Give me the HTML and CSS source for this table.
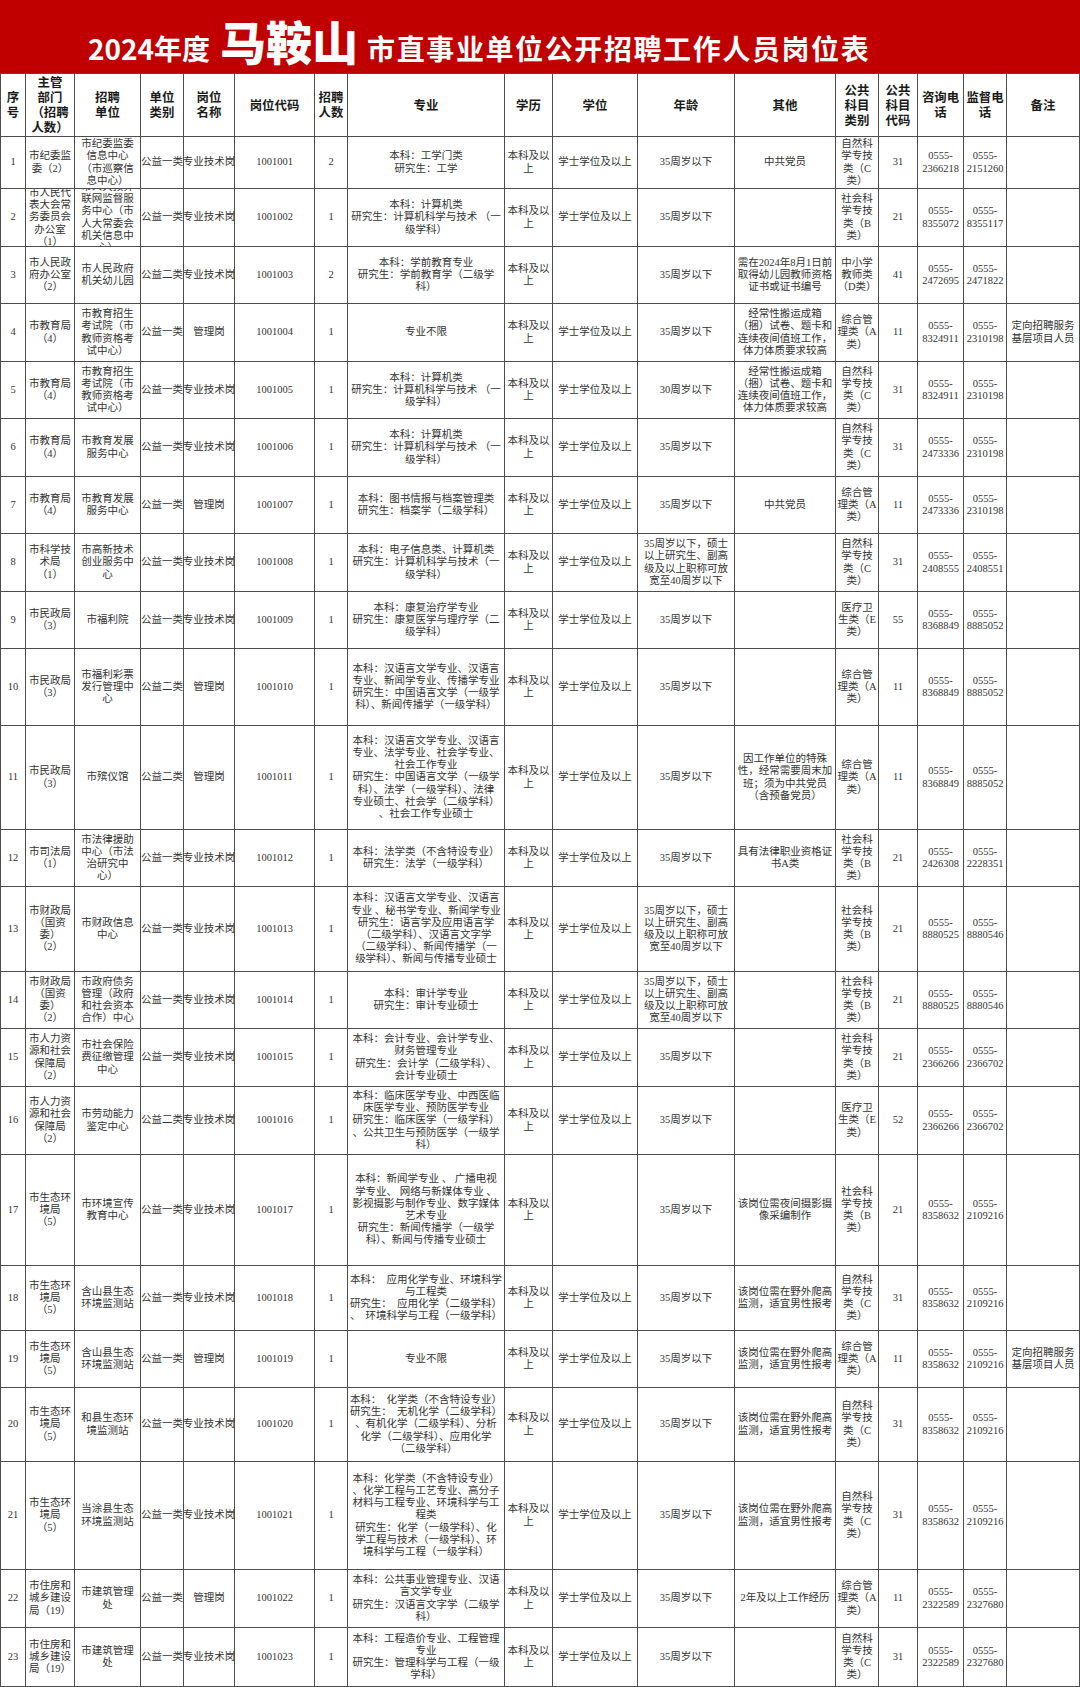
FILE: index.html
```html
<!DOCTYPE html>
<html lang="zh-CN">
<head>
<meta charset="utf-8">
<title>2024年度马鞍山市直事业单位公开招聘工作人员岗位表</title>
<link rel="stylesheet" href="styles.css">
</head>
<body>
<header class="banner">
<span class="t-small">2024年度</span><span class="t-big">马鞍山</span><span class="t-rest">市直事业单位公开招聘工作人员岗位表</span>
</header>
<main class="sheet">
<div class="c h">序
号</div>
<div class="c h">主管
部门
（招聘
人数）</div>
<div class="c h">招聘
单位</div>
<div class="c h">单位
类别</div>
<div class="c h">岗位
名称</div>
<div class="c h">岗位代码</div>
<div class="c h">招聘
人数</div>
<div class="c h">专业</div>
<div class="c h">学历</div>
<div class="c h">学位</div>
<div class="c h">年龄</div>
<div class="c h">其他</div>
<div class="c h">公共
科目
类别</div>
<div class="c h">公共
科目
代码</div>
<div class="c h">咨询电
话</div>
<div class="c h">监督电
话</div>
<div class="c h">备注</div>

<div class="c">1</div>
<div class="c">市纪委监
委（2）</div>
<div class="c">市纪委监委
信息中心
（市巡察信
息中心）</div>
<div class="c">公益一类</div>
<div class="c">专业技术岗</div>
<div class="c">1001001</div>
<div class="c">2</div>
<div class="c">本科：工学门类
研究生：工学</div>
<div class="c">本科及以
上</div>
<div class="c">学士学位及以上</div>
<div class="c">35周岁以下</div>
<div class="c">中共党员</div>
<div class="c">自然科
学专技
类（C
类）</div>
<div class="c">31</div>
<div class="c">0555-
2366218</div>
<div class="c">0555-
2151260</div>
<div class="c"></div>

<div class="c">2</div>
<div class="c">市人民代
表大会常
务委员会
办公室
（1）</div>
<div class="c">市人大预算
联网监督服
务中心（市
人大常委会
机关信息中
心）</div>
<div class="c">公益一类</div>
<div class="c">专业技术岗</div>
<div class="c">1001002</div>
<div class="c">1</div>
<div class="c">本科：计算机类
研究生：计算机科学与技术 （一
级学科）</div>
<div class="c">本科及以
上</div>
<div class="c">学士学位及以上</div>
<div class="c">35周岁以下</div>
<div class="c"></div>
<div class="c">社会科
学专技
类（B
类）</div>
<div class="c">21</div>
<div class="c">0555-
8355072</div>
<div class="c">0555-
8355117</div>
<div class="c"></div>

<div class="c">3</div>
<div class="c">市人民政
府办公室
（2）</div>
<div class="c">市人民政府
机关幼儿园</div>
<div class="c">公益二类</div>
<div class="c">专业技术岗</div>
<div class="c">1001003</div>
<div class="c">2</div>
<div class="c">本科：学前教育专业
研究生：学前教育学（二级学
科）</div>
<div class="c">本科及以
上</div>
<div class="c"></div>
<div class="c">35周岁以下</div>
<div class="c">需在2024年8月1日前
取得幼儿园教师资格
证书或证书编号</div>
<div class="c">中小学
教师类
（D类）</div>
<div class="c">41</div>
<div class="c">0555-
2472695</div>
<div class="c">0555-
2471822</div>
<div class="c"></div>

<div class="c">4</div>
<div class="c">市教育局
（4）</div>
<div class="c">市教育招生
考试院（市
教师资格考
试中心）</div>
<div class="c">公益一类</div>
<div class="c">管理岗</div>
<div class="c">1001004</div>
<div class="c">1</div>
<div class="c">专业不限</div>
<div class="c">本科及以
上</div>
<div class="c">学士学位及以上</div>
<div class="c">35周岁以下</div>
<div class="c">经常性搬运成箱
（捆）试卷、题卡和
连续夜间值班工作，
体力体质要求较高</div>
<div class="c">综合管
理类（A
类）</div>
<div class="c">11</div>
<div class="c">0555-
8324911</div>
<div class="c">0555-
2310198</div>
<div class="c">定向招聘服务
基层项目人员</div>

<div class="c">5</div>
<div class="c">市教育局
（4）</div>
<div class="c">市教育招生
考试院（市
教师资格考
试中心）</div>
<div class="c">公益一类</div>
<div class="c">专业技术岗</div>
<div class="c">1001005</div>
<div class="c">1</div>
<div class="c">本科：计算机类
研究生：计算机科学与技术 （一
级学科）</div>
<div class="c">本科及以
上</div>
<div class="c">学士学位及以上</div>
<div class="c">30周岁以下</div>
<div class="c">经常性搬运成箱
（捆）试卷、题卡和
连续夜间值班工作，
体力体质要求较高</div>
<div class="c">自然科
学专技
类（C
类）</div>
<div class="c">31</div>
<div class="c">0555-
8324911</div>
<div class="c">0555-
2310198</div>
<div class="c"></div>

<div class="c">6</div>
<div class="c">市教育局
（4）</div>
<div class="c">市教育发展
服务中心</div>
<div class="c">公益一类</div>
<div class="c">专业技术岗</div>
<div class="c">1001006</div>
<div class="c">1</div>
<div class="c">本科：计算机类
研究生：计算机科学与技术 （一
级学科）</div>
<div class="c">本科及以
上</div>
<div class="c">学士学位及以上</div>
<div class="c">35周岁以下</div>
<div class="c"></div>
<div class="c">自然科
学专技
类（C
类）</div>
<div class="c">31</div>
<div class="c">0555-
2473336</div>
<div class="c">0555-
2310198</div>
<div class="c"></div>

<div class="c">7</div>
<div class="c">市教育局
（4）</div>
<div class="c">市教育发展
服务中心</div>
<div class="c">公益一类</div>
<div class="c">管理岗</div>
<div class="c">1001007</div>
<div class="c">1</div>
<div class="c">本科：图书情报与档案管理类
研究生：档案学（二级学科）</div>
<div class="c">本科及以
上</div>
<div class="c">学士学位及以上</div>
<div class="c">35周岁以下</div>
<div class="c">中共党员</div>
<div class="c">综合管
理类（A
类）</div>
<div class="c">11</div>
<div class="c">0555-
2473336</div>
<div class="c">0555-
2310198</div>
<div class="c"></div>

<div class="c">8</div>
<div class="c">市科学技
术局
（1）</div>
<div class="c">市高新技术
创业服务中
心</div>
<div class="c">公益一类</div>
<div class="c">专业技术岗</div>
<div class="c">1001008</div>
<div class="c">1</div>
<div class="c">本科：电子信息类、计算机类
研究生：计算机科学与技术（一
级学科）</div>
<div class="c">本科及以
上</div>
<div class="c">学士学位及以上</div>
<div class="c">35周岁以下，硕士
以上研究生、副高
级及以上职称可放
宽至40周岁以下</div>
<div class="c"></div>
<div class="c">自然科
学专技
类（C
类）</div>
<div class="c">31</div>
<div class="c">0555-
2408555</div>
<div class="c">0555-
2408551</div>
<div class="c"></div>

<div class="c">9</div>
<div class="c">市民政局
（3）</div>
<div class="c">市福利院</div>
<div class="c">公益一类</div>
<div class="c">专业技术岗</div>
<div class="c">1001009</div>
<div class="c">1</div>
<div class="c">本科：康复治疗学专业
研究生：康复医学与理疗学（二
级学科）</div>
<div class="c">本科及以
上</div>
<div class="c">学士学位及以上</div>
<div class="c">35周岁以下</div>
<div class="c"></div>
<div class="c">医疗卫
生类（E
类）</div>
<div class="c">55</div>
<div class="c">0555-
8368849</div>
<div class="c">0555-
8885052</div>
<div class="c"></div>

<div class="c">10</div>
<div class="c">市民政局
（3）</div>
<div class="c">市福利彩票
发行管理中
心</div>
<div class="c">公益二类</div>
<div class="c">管理岗</div>
<div class="c">1001010</div>
<div class="c">1</div>
<div class="c">本科：汉语言文学专业、汉语言
专业、新闻学专业、传播学专业
研究生：中国语言文学（一级学
科）、新闻传播学（一级学科）</div>
<div class="c">本科及以
上</div>
<div class="c">学士学位及以上</div>
<div class="c">35周岁以下</div>
<div class="c"></div>
<div class="c">综合管
理类（A
类）</div>
<div class="c">11</div>
<div class="c">0555-
8368849</div>
<div class="c">0555-
8885052</div>
<div class="c"></div>

<div class="c">11</div>
<div class="c">市民政局
（3）</div>
<div class="c">市殡仪馆</div>
<div class="c">公益二类</div>
<div class="c">管理岗</div>
<div class="c">1001011</div>
<div class="c">1</div>
<div class="c">本科：汉语言文学专业、汉语言
专业、法学专业、社会学专业、
社会工作专业
研究生：中国语言文学（一级学
科）、法学（一级学科）、法律
专业硕士、社会学（二级学科）
、社会工作专业硕士</div>
<div class="c">本科及以
上</div>
<div class="c">学士学位及以上</div>
<div class="c">35周岁以下</div>
<div class="c">因工作单位的特殊
性，经常需要周末加
班；须为中共党员
（含预备党员）</div>
<div class="c">综合管
理类（A
类）</div>
<div class="c">11</div>
<div class="c">0555-
8368849</div>
<div class="c">0555-
8885052</div>
<div class="c"></div>

<div class="c">12</div>
<div class="c">市司法局
（1）</div>
<div class="c">市法律援助
中心（市法
治研究中
心）</div>
<div class="c">公益一类</div>
<div class="c">专业技术岗</div>
<div class="c">1001012</div>
<div class="c">1</div>
<div class="c">本科：法学类（不含特设专业）
研究生：法学（一级学科）</div>
<div class="c">本科及以
上</div>
<div class="c">学士学位及以上</div>
<div class="c">35周岁以下</div>
<div class="c">具有法律职业资格证
书A类</div>
<div class="c">社会科
学专技
类（B
类）</div>
<div class="c">21</div>
<div class="c">0555-
2426308</div>
<div class="c">0555-
2228351</div>
<div class="c"></div>

<div class="c">13</div>
<div class="c">市财政局
（国资
委）
（2）</div>
<div class="c">市财政信息
中心</div>
<div class="c">公益一类</div>
<div class="c">专业技术岗</div>
<div class="c">1001013</div>
<div class="c">1</div>
<div class="c">本科：汉语言文学专业、汉语言
专业 、秘书学专业、新闻学专业
研究生：语言学及应用语言学
（二级学科）、汉语言文字学
（二级学科）、新闻传播学（一
级学科）、新闻与传播专业硕士</div>
<div class="c">本科及以
上</div>
<div class="c">学士学位及以上</div>
<div class="c">35周岁以下，硕士
以上研究生、副高
级及以上职称可放
宽至40周岁以下</div>
<div class="c"></div>
<div class="c">社会科
学专技
类（B
类）</div>
<div class="c">21</div>
<div class="c">0555-
8880525</div>
<div class="c">0555-
8880546</div>
<div class="c"></div>

<div class="c">14</div>
<div class="c">市财政局
（国资
委）
（2）</div>
<div class="c">市政府债务
管理（政府
和社会资本
合作）中心</div>
<div class="c">公益一类</div>
<div class="c">专业技术岗</div>
<div class="c">1001014</div>
<div class="c">1</div>
<div class="c">本科：审计学专业
研究生：审计专业硕士</div>
<div class="c">本科及以
上</div>
<div class="c">学士学位及以上</div>
<div class="c">35周岁以下，硕士
以上研究生、副高
级及以上职称可放
宽至40周岁以下</div>
<div class="c"></div>
<div class="c">社会科
学专技
类（B
类）</div>
<div class="c">21</div>
<div class="c">0555-
8880525</div>
<div class="c">0555-
8880546</div>
<div class="c"></div>

<div class="c">15</div>
<div class="c">市人力资
源和社会
保障局
（2）</div>
<div class="c">市社会保险
费征缴管理
中心</div>
<div class="c">公益一类</div>
<div class="c">专业技术岗</div>
<div class="c">1001015</div>
<div class="c">1</div>
<div class="c">本科：会计专业、会计学专业、
财务管理专业
研究生：会计学（二级学科）、
会计专业硕士</div>
<div class="c">本科及以
上</div>
<div class="c">学士学位及以上</div>
<div class="c">35周岁以下</div>
<div class="c"></div>
<div class="c">社会科
学专技
类（B
类）</div>
<div class="c">21</div>
<div class="c">0555-
2366266</div>
<div class="c">0555-
2366702</div>
<div class="c"></div>

<div class="c">16</div>
<div class="c">市人力资
源和社会
保障局
（2）</div>
<div class="c">市劳动能力
鉴定中心</div>
<div class="c">公益二类</div>
<div class="c">专业技术岗</div>
<div class="c">1001016</div>
<div class="c">1</div>
<div class="c">本科：临床医学专业、中西医临
床医学专业、预防医学专业
研究生：临床医学（一级学科）
、公共卫生与预防医学（一级学
科）</div>
<div class="c">本科及以
上</div>
<div class="c">学士学位及以上</div>
<div class="c">35周岁以下</div>
<div class="c"></div>
<div class="c">医疗卫
生类（E
类）</div>
<div class="c">52</div>
<div class="c">0555-
2366266</div>
<div class="c">0555-
2366702</div>
<div class="c"></div>

<div class="c">17</div>
<div class="c">市生态环
境局
（5）</div>
<div class="c">市环境宣传
教育中心</div>
<div class="c">公益一类</div>
<div class="c">专业技术岗</div>
<div class="c">1001017</div>
<div class="c">1</div>
<div class="c">本科：新闻学专业 、 广播电视
学专业、 网络与新媒体专业 、
影视摄影与制作专业、数字媒体
艺术专业
研究生：新闻传播学（一级学
科）、新闻与传播专业硕士</div>
<div class="c">本科及以
上</div>
<div class="c"></div>
<div class="c">35周岁以下</div>
<div class="c">该岗位需夜间摄影摄
像采编制作</div>
<div class="c">社会科
学专技
类（B
类）</div>
<div class="c">21</div>
<div class="c">0555-
8358632</div>
<div class="c">0555-
2109216</div>
<div class="c"></div>

<div class="c">18</div>
<div class="c">市生态环
境局
（5）</div>
<div class="c">含山县生态
环境监测站</div>
<div class="c">公益一类</div>
<div class="c">专业技术岗</div>
<div class="c">1001018</div>
<div class="c">1</div>
<div class="c">本科：  应用化学专业、环境科学
与工程类
研究生：  应用化学（二级学科）
、  环境科学与工程（一级学科）</div>
<div class="c">本科及以
上</div>
<div class="c">学士学位及以上</div>
<div class="c">35周岁以下</div>
<div class="c">该岗位需在野外爬高
监测，适宜男性报考</div>
<div class="c">自然科
学专技
类（C
类）</div>
<div class="c">31</div>
<div class="c">0555-
8358632</div>
<div class="c">0555-
2109216</div>
<div class="c"></div>

<div class="c">19</div>
<div class="c">市生态环
境局
（5）</div>
<div class="c">含山县生态
环境监测站</div>
<div class="c">公益一类</div>
<div class="c">管理岗</div>
<div class="c">1001019</div>
<div class="c">1</div>
<div class="c">专业不限</div>
<div class="c">本科及以
上</div>
<div class="c">学士学位及以上</div>
<div class="c">35周岁以下</div>
<div class="c">该岗位需在野外爬高
监测，适宜男性报考</div>
<div class="c">综合管
理类（A
类）</div>
<div class="c">11</div>
<div class="c">0555-
8358632</div>
<div class="c">0555-
2109216</div>
<div class="c">定向招聘服务
基层项目人员</div>

<div class="c">20</div>
<div class="c">市生态环
境局
（5）</div>
<div class="c">和县生态环
境监测站</div>
<div class="c">公益一类</div>
<div class="c">专业技术岗</div>
<div class="c">1001020</div>
<div class="c">1</div>
<div class="c">本科：  化学类（不含特设专业）
研究生：  无机化学（二级学科）
、有机化学（二级学科）、分析
化学（二级学科）、应用化学
（二级学科）</div>
<div class="c">本科及以
上</div>
<div class="c">学士学位及以上</div>
<div class="c">35周岁以下</div>
<div class="c">该岗位需在野外爬高
监测，适宜男性报考</div>
<div class="c">自然科
学专技
类（C
类）</div>
<div class="c">31</div>
<div class="c">0555-
8358632</div>
<div class="c">0555-
2109216</div>
<div class="c"></div>

<div class="c">21</div>
<div class="c">市生态环
境局
（5）</div>
<div class="c">当涂县生态
环境监测站</div>
<div class="c">公益一类</div>
<div class="c">专业技术岗</div>
<div class="c">1001021</div>
<div class="c">1</div>
<div class="c">本科：化学类（不含特设专业）
、化学工程与工艺专业、高分子
材料与工程专业、环境科学与工
程类
研究生：化学（一级学科）、化
学工程与技术（一级学科）、环
境科学与工程（一级学科）</div>
<div class="c">本科及以
上</div>
<div class="c">学士学位及以上</div>
<div class="c">35周岁以下</div>
<div class="c">该岗位需在野外爬高
监测，适宜男性报考</div>
<div class="c">自然科
学专技
类（C
类）</div>
<div class="c">31</div>
<div class="c">0555-
8358632</div>
<div class="c">0555-
2109216</div>
<div class="c"></div>

<div class="c">22</div>
<div class="c">市住房和
城乡建设
局（19）</div>
<div class="c">市建筑管理
处</div>
<div class="c">公益一类</div>
<div class="c">管理岗</div>
<div class="c">1001022</div>
<div class="c">1</div>
<div class="c">本科：公共事业管理专业、汉语
言文学专业
研究生：汉语言文字学（二级学
科）</div>
<div class="c">本科及以
上</div>
<div class="c">学士学位及以上</div>
<div class="c">35周岁以下</div>
<div class="c">2年及以上工作经历</div>
<div class="c">综合管
理类（A
类）</div>
<div class="c">11</div>
<div class="c">0555-
2322589</div>
<div class="c">0555-
2327680</div>
<div class="c"></div>

<div class="c">23</div>
<div class="c">市住房和
城乡建设
局（19）</div>
<div class="c">市建筑管理
处</div>
<div class="c">公益一类</div>
<div class="c">专业技术岗</div>
<div class="c">1001023</div>
<div class="c">1</div>
<div class="c">本科：工程造价专业、工程管理
专业
研究生：管理科学与工程（一级
学科）</div>
<div class="c">本科及以
上</div>
<div class="c">学士学位及以上</div>
<div class="c">35周岁以下</div>
<div class="c"></div>
<div class="c">自然科
学专技
类（C
类）</div>
<div class="c">31</div>
<div class="c">0555-
2322589</div>
<div class="c">0555-
2327680</div>
<div class="c"></div>
</main>
</body>
</html>
```
FILE: styles.css
```css
* {
  box-sizing: border-box;
}

html,
body {
  margin: 0;
  padding: 0;
  background: #ffffff;
}

body {
  width: 1080px;
  font-family: "Liberation Serif", "Noto Sans CJK SC", serif;
}

.banner {
  height: 73px;
  background: #c00000;
  color: #ffffff;
  display: flex;
  align-items: baseline;
  padding: 17px 0 0 88px;
  font-family: "Noto Sans CJK SC", sans-serif;
  white-space: nowrap;
}

.t-small {
  font-size: 28px;
  line-height: 1;
  font-weight: 700;
}

.t-big {
  font-size: 46px;
  line-height: 1;
  font-weight: 900;
  margin: 0 9px 0 10px;
}

.t-rest {
  font-size: 28px;
  line-height: 1;
  font-weight: 700;
  letter-spacing: 1.6px;
}

.sheet {
  width: 1080px;
  display: grid;
  grid-template-columns: 25px 49px 66px 43px 51px 80px 33px 157px 48px 85px 97px 101px 43px 39px 46px 43px 73px;
  grid-template-rows: 63px 52px 58px 57px 58px 57px 58px 57px 58px 57px 77px 104px 57px 85px 57px 58px 68px 111px 65px 57px 74px 108px 58px 59px;
  border-top: 1px solid #4d4d4d;
  border-left: 1px solid #4d4d4d;
}

.c {
  border-right: 1px solid #4d4d4d;
  border-bottom: 1px solid #4d4d4d;
  overflow: hidden;
  display: flex;
  align-items: center;
  justify-content: center;
  text-align: center;
  white-space: pre;
  font-size: 10.5px;
  line-height: 12.2px;
  color: #333333;
}

.h {
  font-family: "Noto Sans CJK SC", sans-serif;
  font-weight: 700;
  font-size: 12.4px;
  line-height: 15px;
  color: #1a1a1a;
}
```
